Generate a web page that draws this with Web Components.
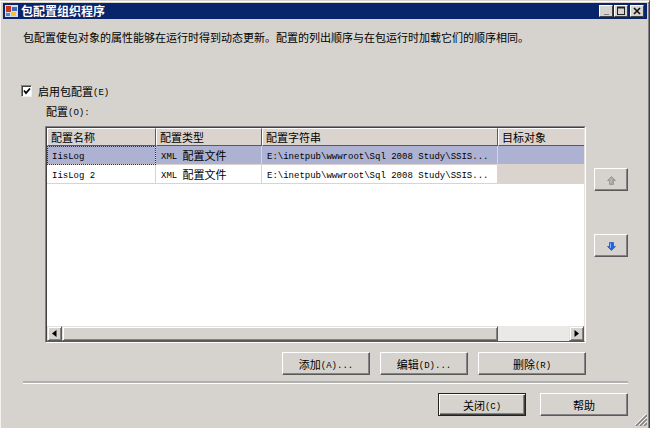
<!DOCTYPE html>
<html lang="zh-CN">
<head>
<meta charset="utf-8">
<title>包配置组织程序</title>
<style>
  body {
    margin: 0;
    background: #d6d3ce;
    color: #000;
    font: 11px/16px "Noto Sans CJK SC", sans-serif;
  }

  .latin {
    font: 9px/9px "Liberation Mono", monospace;
    vertical-align: 1px;
  }

  .intro {
    margin: 10px 0 0 2px;
  }

  .enable {
    display: flex;
    align-items: center;
    gap: 5px;
    margin-top: 38px;
  }

  .caption {
    margin: 4px 0 7px 25px;
  }

  .columns {
    flex: 1;
    display: flex;
    gap: 8px;
    margin-left: 24px;
  }

  .main {
    flex: 1;
    min-width: 0;
    display: flex;
    flex-direction: column;
  }

  .order {
    display: flex;
    flex-direction: column;
    gap: 43px;
    padding-top: 42px;
    width: 34px;
  }

  .actions {
    display: flex;
    justify-content: flex-end;
    gap: 10px;
    margin-top: 9px;
  }

  .actions win-button,
  .footer win-button {
    width: 88px;
  }

  .actions win-button.wide {
    width: 108px;
  }

  hr {
    width: calc(100% - 2px);
    box-sizing: border-box;
    height: 3px;
    margin: 6px 0 9px 2px;
    border: 0;
    border-top: 2px solid #b0b0b0;
    border-bottom: 1px solid #fff;
  }

  .footer {
    display: flex;
    justify-content: flex-end;
    gap: 14px;
    padding-bottom: 12px;
  }
</style>
</head>
<body>

<win-dialog>
  <span slot="title">包配置组织程序</span>

  <p class="intro">包配置使包对象的属性能够在运行时得到动态更新。配置的列出顺序与在包运行时加载它们的顺序相同。</p>
  <div class="enable">
    <win-checkbox checked>启用包配置<span class="latin">(E)</span></win-checkbox>
  </div>
  <div class="caption">配置<span class="latin">(O):</span></div>

  <div class="columns">
    <div class="main">
      <config-grid></config-grid>
      <div class="actions">
        <win-button>添加<span class="latin">(A)...</span></win-button>
        <win-button>编辑<span class="latin">(D)...</span></win-button>
        <win-button class="wide">删除<span class="latin">(R)</span></win-button>
      </div>
    </div>
    <div class="order">
      <win-button label="上移" disabled>
        <svg width="9" height="9" viewBox="0 0 9 9">
          <path d="M4.5.5 8.5 4.5H6.5V8.5H2.5V4.5H.5Z" fill="#a5a5a5" stroke="#8c8c8c" stroke-width=".7"/>
          <path d="M4 2.5V7" stroke="#c4c2c2"/>
        </svg>
      </win-button>
      <win-button label="下移">
        <svg width="9" height="9" viewBox="0 0 9 9">
          <path d="M4.5 8.5 8.5 4.5H6.5V.5H2.5V4.5H.5Z" fill="#2861e0" stroke="#2450b8" stroke-width=".7"/>
          <path d="M3.5 1.5V6" stroke="#83b4ff"/>
        </svg>
      </win-button>
    </div>
  </div>

  <hr>
  <div class="footer">
    <win-button primary>关闭<span class="latin">(C)</span></win-button>
    <win-button>帮助</win-button>
  </div>
</win-dialog>

<script>
class WinDialog extends HTMLElement {
  constructor() {
    super();
    this.attachShadow({ mode: 'open' });
  }

  connectedCallback() {
    this.shadowRoot.innerHTML = `
      <style>
        :host {
          display: flex;
          flex-direction: column;
          position: relative;
          box-sizing: border-box;
          min-height: 100vh;
          padding: 2px 2px 0;
          border: 1px solid #f4f3f1;
          border-top-color: #d6d3ce;
          border-right-color: #424142;
          border-bottom: 0;
          box-shadow: inset 0 1px #fff, inset -1px 0 #848284;
        }

        header {
          display: flex;
          align-items: center;
          height: 16px;
          padding: 0 3px 0 2px;
          background: #08246b;
          color: #fff;
          font-size: 12px;
          font-weight: bold;
        }

        .title {
          flex: 1;
          margin-left: 3px;
        }

        header button {
          display: flex;
          align-items: center;
          justify-content: center;
          box-sizing: border-box;
          width: 14px;
          height: 12px;
          margin: 0 0 0 1px;
          padding: 0;
          border: 1px solid;
          border-color: #fff #424142 #424142 #fff;
          background: #d6d3ce;
        }

        header .close {
          margin-left: 2px;
        }

        section {
          flex: 1;
          display: flex;
          flex-direction: column;
          padding: 0 19px 0 18px;
        }

        .grip {
          position: absolute;
          right: 2px;
          bottom: 2px;
        }
      </style>
      <header>
        <svg width="13" height="12" viewBox="0 0 13 12">
          <rect width="13" height="12" fill="#d9dcea"/>
          <rect x="1" y="1" width="5" height="6" fill="#c8391c"/>
          <rect x="7" y="2" width="5" height="4" fill="#3c68c8"/>
          <rect x="1" y="8" width="4" height="3" fill="#5b82c8"/>
          <rect x="6" y="7" width="5" height="4" fill="#f5c52d"/>
        </svg>
        <div class="title"><slot name="title"></slot></div>
        <button aria-label="最小化"><svg width="10" height="10"><path d="M3 8.5H8" stroke="#848284"/></svg></button>
        <button aria-label="最大化"><svg width="10" height="10"><path d="M1.5 1V9M8.5 1V9M1 8.5H9" stroke="#222"/><path d="M1 1.5H9" stroke="#222" stroke-width="2"/></svg></button>
        <button class="close" aria-label="关闭"><svg width="10" height="10"><path d="M2 2 8 8M8 2 2 8" stroke="#111" stroke-width="1.6"/></svg></button>
      </header>
      <section><slot></slot></section>
      <svg class="grip" width="12" height="12">
        <path d="M1 12 12 1M5 12 12 5M9 12 12 9" stroke="#848284" stroke-width="1.6"/>
        <path d="M0 11 11 0M4 11 12 3M8 11 12 7" stroke="#fff" stroke-width=".8"/>
      </svg>
    `;
  }
}

class WinButton extends HTMLElement {
  constructor() {
    super();
    this.attachShadow({ mode: 'open' });
  }

  connectedCallback() {
    const label = this.getAttribute('label');
    this.shadowRoot.innerHTML = `
      <style>
        :host {
          display: block;
        }

        button {
          display: flex;
          align-items: center;
          justify-content: center;
          box-sizing: border-box;
          width: 100%;
          height: 23px;
          padding: 0;
          border: 1px solid;
          border-color: #fff #5a5a5a #5a5a5a #fff;
          box-shadow: inset -1px -1px #848284;
          background: #d6d3ce;
          color: inherit;
          font: inherit;
        }

        :host([primary]) button {
          border-color: #222;
          box-shadow: inset 1px 1px #fff, inset -1px -1px #424142, inset -2px -2px #848284;
        }
      </style>
      <button type="button" ${label ? `aria-label="${label}"` : ''} ${this.hasAttribute('disabled') ? 'disabled' : ''}><span><slot></slot></span></button>
    `;
  }
}

class WinCheckbox extends HTMLElement {
  constructor() {
    super();
    this.attachShadow({ mode: 'open' });
  }

  connectedCallback() {
    this.shadowRoot.innerHTML = `
      <style>
        :host {
          display: block;
        }

        label {
          display: flex;
          align-items: center;
          gap: 6px;
        }

        input {
          appearance: none;
          box-sizing: border-box;
          width: 11px;
          height: 12px;
          margin: 0;
          border: 1px solid;
          border-color: #848284 #eee #eee #848284;
          box-shadow: inset 1px 1px #424142;
          background: #fff;
        }

        .box {
          display: grid;
        }

        .box > * {
          grid-area: 1 / 1;
        }

        svg {
          pointer-events: none;
          visibility: hidden;
        }

        input:checked + svg {
          visibility: visible;
        }
      </style>
      <label>
        <span class="box">
          <input type="checkbox" ${this.hasAttribute('checked') ? 'checked' : ''}>
          <svg width="11" height="12"><path d="M3 5.5 5 8 9 3.5" fill="none" stroke="#000" stroke-width="1.8"/></svg>
        </span>
        <span><slot></slot></span>
      </label>
    `;
  }
}

class WinScrollbar extends HTMLElement {
  constructor() {
    super();
    this.attachShadow({ mode: 'open' });
  }

  connectedCallback() {
    this.shadowRoot.innerHTML = `
      <style>
        :host {
          display: flex;
          height: 15px;
          background: #ebe9e7;
        }

        button,
        .thumb {
          box-sizing: border-box;
          border: 1px solid;
          border-color: #e4e2df #5a5a5a #5a5a5a #e4e2df;
          box-shadow: inset 1px 1px #fff, inset -1px -1px #848284;
          background: #d6d3ce;
        }

        button {
          display: flex;
          align-items: center;
          justify-content: center;
          width: 15px;
          padding: 0;
        }

        .track {
          flex: 1;
        }

        .thumb {
          width: 86%;
          height: 100%;
        }
      </style>
      <button aria-label="向左滚动"><svg width="5" height="7"><path d="M4.5 0V7L0 3.5Z"/></svg></button>
      <div class="track"><div class="thumb"></div></div>
      <button aria-label="向右滚动"><svg width="5" height="7"><path d="M.5 0V7L5 3.5Z"/></svg></button>
    `;
  }
}

class ConfigGrid extends HTMLElement {
  constructor() {
    super();
    this.attachShadow({ mode: 'open' });
    this.rows = [
      { name: 'IisLog', path: 'E:\\inetpub\\wwwroot\\Sql 2008 Study\\SSIS...', selected: true },
      { name: 'IisLog 2', path: 'E:\\inetpub\\wwwroot\\Sql 2008 Study\\SSIS...', selected: false }
    ];
  }

  connectedCallback() {
    this.render();
  }

  render() {
    this.shadowRoot.innerHTML = `
      <style>
        :host {
          flex: 1;
          display: flex;
          flex-direction: column;
          border: 1px solid;
          border-color: #848284 #fff #fff #848284;
          background: #fff;
        }

        .frame {
          flex: 1;
          display: flex;
          flex-direction: column;
          border: 1px solid;
          border-color: #424142 #e4e2df #5a5a5a #424142;
        }

        .body {
          flex: 1;
        }

        table {
          width: 100%;
          table-layout: fixed;
          border-collapse: separate;
          border-spacing: 0;
        }

        th,
        td {
          box-sizing: border-box;
          height: 19px;
          padding: 0 0 0 5px;
          overflow: hidden;
          text-align: left;
          white-space: nowrap;
          font-weight: normal;
        }

        th {
          height: 18px;
          padding-left: 3px;
          border: 1px solid;
          border-color: #fff #5a5a5a #5a5a5a #fff;
          background: #dad3ce;
        }

        th:last-child {
          border-right: 0;
        }

        td {
          border-right: 1px solid #dad3ce;
          border-bottom: 1px solid #dad3ce;
        }

        td:last-child {
          border-right: 0;
          background: #dad3ce;
        }

        tr.selected td {
          background: #adb2d2;
        }

        tr.selected td:first-child {
          outline: 1px dotted #333;
          outline-offset: -1px;
        }

        .name { width: 109px; }
        .type { width: 106px; }
        .path { width: 236px; }

        .latin {
          font: 9px/9px "Liberation Mono", monospace;
          vertical-align: 1px;
        }
      </style>
      <div class="frame">
        <div class="body">
          <table>
            <thead>
              <tr>
                <th class="name">配置名称</th>
                <th class="type">配置类型</th>
                <th class="path">配置字符串</th>
                <th>目标对象</th>
              </tr>
            </thead>
            <tbody>
              ${this.rows.map(r => `
                <tr class="${r.selected ? 'selected' : ''}">
                  <td><span class="latin">${r.name}</span></td>
                  <td><span class="latin">XML </span>配置文件</td>
                  <td><span class="latin">${r.path}</span></td>
                  <td></td>
                </tr>
              `).join('')}
            </tbody>
          </table>
        </div>
        <win-scrollbar></win-scrollbar>
      </div>
    `;
  }
}

customElements.define('win-dialog', WinDialog);
customElements.define('win-button', WinButton);
customElements.define('win-checkbox', WinCheckbox);
customElements.define('win-scrollbar', WinScrollbar);
customElements.define('config-grid', ConfigGrid);
</script>
</body>
</html>
